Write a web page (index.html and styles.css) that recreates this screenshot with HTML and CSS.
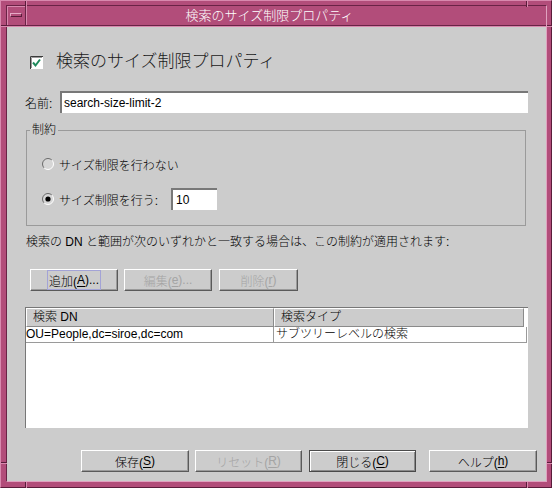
FILE: index.html
```html
<!DOCTYPE html>
<html lang="ja">
<head>
<meta charset="utf-8">
<title>検索のサイズ制限プロパティ</title>
<link rel="stylesheet" href="styles.css">
</head>
<body>
<div class="window">
  <span class="notch v" style="left:24px;top:0"></span>
  <span class="notch v" style="left:525px;top:0"></span>
  <span class="notch v" style="left:24px;top:481px"></span>
  <span class="notch v" style="left:525px;top:481px"></span>
  <span class="notch h" style="left:0;top:24px"></span>
  <span class="notch h" style="left:546px;top:24px"></span>
  <span class="notch h" style="left:0;top:461px"></span>
  <span class="notch h" style="left:546px;top:461px"></span>
  <div class="inner">
    <div class="titlebar">
      <div class="menu-btn"><span class="menu-bar"></span></div>
      <div class="title">検索のサイズ制限プロパティ</div>
    </div>
    <div class="content">
      <div class="check-row">
        <svg class="checkbox" width="13" height="13" viewBox="0 0 13 13">
          <rect x="0" y="0" width="13" height="13" fill="#ffffff"/>
          <path d="M0.5 13 V0.5 H13" stroke="#3a3a3a" fill="none"/>
          <path d="M1.5 12 V1.5 H12" stroke="#9a9a9a" fill="none"/>
          <path d="M3 6.5 L5.5 9.5 L10 3.5" stroke="#1e8a5c" stroke-width="2" fill="none"/>
        </svg>
        <span class="heading">検索のサイズ制限プロパティ</span>
      </div>
      <div class="name-row">
        <span class="name-label">名前:</span>
        <div class="textfield wide">search-size-limit-2</div>
      </div>
      <div class="group">
        <span class="group-label">制約</span>
        <div class="radio-row">
          <svg width="12" height="12" viewBox="0 0 12 12">
            <circle cx="6" cy="6" r="5.5" fill="#d6d6d6"/>
            <path d="M2.11 9.89 A5.5 5.5 0 0 1 9.89 2.11" stroke="#6a6a6a" fill="none"/>
            <path d="M9.89 2.11 A5.5 5.5 0 0 1 2.11 9.89" stroke="#ffffff" fill="none"/>
          </svg>
          <span>サイズ制限を行わない</span>
        </div>
        <div class="radio-row second">
          <svg width="12" height="12" viewBox="0 0 12 12">
            <circle cx="6" cy="6" r="5.5" fill="#d6d6d6"/>
            <path d="M2.11 9.89 A5.5 5.5 0 0 1 9.89 2.11" stroke="#6a6a6a" fill="none"/>
            <path d="M9.89 2.11 A5.5 5.5 0 0 1 2.11 9.89" stroke="#ffffff" fill="none"/>
            <circle cx="6" cy="6" r="2.6" fill="#000000"/>
          </svg>
          <span>サイズ制限を行う:</span>
          <div class="textfield small">10</div>
        </div>
      </div>
      <p class="desc">検索の DN と範囲が次のいずれかと一致する場合は、この制約が適用されます:</p>
      <div class="btn-row">
        <button class="btn w88"><span class="focus">追加(<u>A</u>)...</span></button>
        <button class="btn w88 disabled">編集(<u>e</u>)...</button>
        <button class="btn w79 disabled g7">削除(<u>r</u>)</button>
      </div>
      <div class="table">
        <div class="thead">
          <div class="th c1">検索 DN</div>
          <div class="th c2">検索タイプ</div>
        </div>
        <div class="tr">
          <div class="td c1">OU=People,dc=siroe,dc=com</div>
          <div class="td c2">サブツリーレベルの検索</div>
        </div>
      </div>
      <div class="footer">
        <button class="btn b108">保存(<u>S</u>)</button>
        <button class="btn b107 disabled g6">リセット(<u>R</u>)</button>
        <button class="btn b107 default g7">閉じる(<u>C</u>)</button>
        <button class="btn b108 g13">ヘルプ(<u>h</u>)</button>
      </div>
    </div>
  </div>
</div>
</body>
</html>
```

FILE: styles.css
```css
html, body {
  margin: 0;
  padding: 0;
  background: #b24d7a;
}

body {
  font-family: "Liberation Sans", "Noto Sans CJK JP", sans-serif;
  font-size: 12px;
  font-weight: 300;
  color: #000;
}

.window {
  position: relative;
  width: 552px;
  height: 488px;
  box-sizing: border-box;
  background: #b24d7a;
  border: 1px solid;
  border-color: #d889ae #5a1c3a #5a1c3a #d889ae;
  padding: 4px 4px 5px 5px;
}

.notch {
  position: absolute;
  background: #5a1c3a;
}

.notch.v {
  width: 1px;
  height: 6px;
  box-shadow: 1px 0 0 #d889ae;
}

.notch.h {
  width: 6px;
  height: 1px;
  box-shadow: 0 1px 0 #d889ae;
}

.inner {
  height: 100%;
  box-sizing: border-box;
  border: 1px solid;
  border-color: #6a2346 #e0a2c0 #e0a2c0 #6a2346;
  display: flex;
  flex-direction: column;
  background: #d889ae;
}

.titlebar {
  height: 20px;
  flex: none;
  box-sizing: border-box;
  display: flex;
  background: #b24d7a;
  border-bottom: 1px solid #6a2346;
  margin-bottom: 1px;
}

.menu-btn {
  width: 19px;
  flex: none;
  box-sizing: border-box;
  border-right: 1px solid #6a2346;
  box-shadow: inset 1px 1px 0 #d889ae;
  position: relative;
}

.menu-bar {
  display: block;
  width: 12px;
  height: 4px;
  margin: 7px 0 0 3px;
  box-sizing: border-box;
  border: 1px solid;
  border-color: #e6a9c6 #5a1c3a #5a1c3a #e6a9c6;
  background: #b24d7a;
}

.title {
  flex: 1;
  color: #ffffff;
  font-size: 13px;
  line-height: 19px;
  text-align: center;
  padding-right: 34px;
  border-left: 1px solid #d889ae;
}

.content {
  flex: 1;
  background: #cccccc;
  padding: 0 18px;
  display: flex;
  flex-direction: column;
}

.check-row {
  margin-top: 24px;
  height: 22px;
  display: flex;
  align-items: center;
  padding-left: 5px;
}

.checkbox {
  flex: none;
}

.heading {
  margin-left: 13px;
  font-size: 17px;
  color: #1a1a1a;
  line-height: 22px;
}

.name-row {
  margin-top: 18px;
  height: 22px;
  display: flex;
  align-items: center;
}

.name-label {
  width: 35px;
  flex: none;
}

.textfield {
  height: 22px;
  box-sizing: border-box;
  background: #ffffff;
  border-top: 2px solid #787878;
  border-left: 2px solid #787878;
  padding-left: 2px;
  display: flex;
  align-items: center;
}

.textfield.wide {
  flex: 1;
}

.textfield.small {
  width: 46px;
  flex: none;
  margin-left: 8px;
  padding-left: 3px;
}

.group {
  position: relative;
  margin: 17px 2px 0 1px;
  border: 1px solid #9a9a9a;
  padding: 22px 0 15px 15px;
}

.group-label {
  position: absolute;
  top: -8px;
  left: 3px;
  padding: 0 2px;
  line-height: 14px;
  background: #cccccc;
}

.radio-row {
  height: 22px;
  display: flex;
  align-items: center;
  gap: 5px;
}

.radio-row svg {
  flex: none;
}

.radio-row.second {
  margin-top: 13px;
}

.desc {
  margin: 8px 0 0 1px;
  line-height: 16px;
}

.btn-row {
  margin-top: 19px;
  display: flex;
  gap: 6px;
  padding-left: 5px;
}

.btn {
  height: 22px;
  box-sizing: border-box;
  padding: 0;
  margin: 0;
  background: #cccccc;
  border: 1px solid;
  border-color: #ffffff #5a5a5a #5a5a5a #ffffff;
  box-shadow: inset -1px -1px 0 #9a9a9a;
  font-family: inherit;
  font-size: 12px;
  font-weight: 300;
  color: #000;
  display: flex;
  align-items: center;
  justify-content: center;
  flex: none;
}

.btn u {
  text-underline-offset: 2px;
}

.btn.disabled {
  color: #a4a4a4;
}

.btn.default {
  border-color: #4a4a4a;
  box-shadow: inset 1px 1px 0 #ffffff, inset -1px -1px 0 #8a8a8a;
}

.focus {
  height: 100%;
  box-sizing: border-box;
  border: 1px solid #a3a3d6;
  padding: 0 1px;
  display: flex;
  align-items: center;
}

.w88 { width: 88px; }
.w79 { width: 79px; }
.b108 { width: 108px; }
.b107 { width: 107px; }
.g6 { margin-left: 6px; }
.g7 { margin-left: 7px; }
.g13 { margin-left: 13px; }

.btn-row .g7 {
  margin-left: 1px;
}

.table {
  margin-top: 16px;
  height: 121px;
  flex: none;
  box-sizing: border-box;
  background: #ffffff;
  border-top: 1px solid #777777;
  border-left: 1px solid #777777;
}

.thead {
  display: flex;
  height: 19px;
}

.th {
  box-sizing: border-box;
  height: 19px;
  background: #cccccc;
  border: 1px solid;
  border-color: #ffffff #8a8a8a #8a8a8a #ffffff;
  line-height: 17px;
  padding-left: 6px;
}

.th.c1 { width: 248px; }
.th.c2 { width: 250px; }

.tr {
  display: flex;
  width: 501px;
  height: 16px;
  box-sizing: border-box;
  border-bottom: 1px solid #9a9a9a;
  border-right: 1px solid #9a9a9a;
}

.td {
  line-height: 15px;
  box-sizing: border-box;
  white-space: nowrap;
}

.td.c1 {
  width: 248px;
  border-right: 1px solid #9a9a9a;
}

.td.c2 {
  padding-left: 2px;
}

.footer {
  margin-top: 22px;
  margin-right: -9px;
  display: flex;
  justify-content: flex-end;
}
```
